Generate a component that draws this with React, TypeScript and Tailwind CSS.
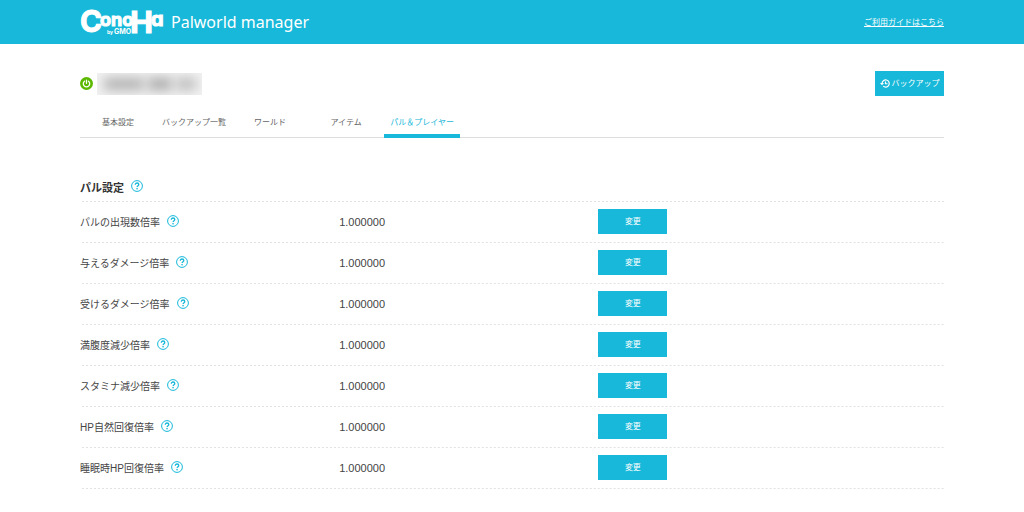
import { useState } from "react"

const tabs = ["基本設定", "バックアップ一覧", "ワールド", "アイテム", "パル＆プレイヤー"]

const settings = [
    { id: "spawn", label: "パルの出現数倍率", value: "1.000000" },
    { id: "attack", label: "与えるダメージ倍率", value: "1.000000" },
    { id: "defense", label: "受けるダメージ倍率", value: "1.000000" },
    { id: "hunger", label: "満腹度減少倍率", value: "1.000000" },
    { id: "stamina", label: "スタミナ減少倍率", value: "1.000000" },
    { id: "hp", label: "HP自然回復倍率", value: "1.000000" },
    { id: "sleep-hp", label: "睡眠時HP回復倍率", value: "1.000000" },
]

export default function App() {
    const [active, setActive] = useState(4)

    return (
        <div className="min-h-screen bg-white font-['Liberation_Sans','Noto_Sans_CJK_JP',sans-serif] text-[#444]">
            <header className="flex h-11 items-center justify-between bg-[#17b8d9] px-20 text-white">
                <div className="flex items-center gap-[7px]">
                    <Logo />
                    <h1 className="font-['Noto_Sans',sans-serif] text-base leading-6 font-normal">Palworld manager</h1>
                </div>
                <a href="#guide" className="pt-0.5 text-[8px] leading-3 underline underline-offset-1">ご利用ガイドはこちら</a>
            </header>

            <main className="px-20 pt-[27px]">
                <div className="flex items-center justify-between">
                    <div className="flex items-center gap-1">
                        <PowerIcon />
                        {/* Server address, masked */}
                        <div className="flex h-[22px] w-[105px] items-center justify-center gap-1 overflow-hidden bg-[#f2f2f2]">
                            <div className="h-3 w-10 bg-[#b0b0b0] blur-[6px]" />
                            <div className="h-3 w-6 bg-[#a8a8a8] blur-[6px]" />
                            <div className="h-3 w-5 bg-[#bbb] blur-[6px]" />
                        </div>
                    </div>
                    <button className="flex h-[25px] w-[69px] items-center justify-center gap-0.5 bg-[#17b8d9] text-[8px] leading-3 text-white">
                        <HistoryIcon />
                        バックアップ
                    </button>
                </div>

                <nav className="mt-3 border-b border-[#ddd]">
                    <div className="-mb-px flex w-[44%]">
                        {tabs.map((tab, i) => (
                            <button
                                key={tab}
                                onClick={() => setActive(i)}
                                className={`h-[30px] flex-1 border-b-4 pt-1 text-[8px] leading-3 whitespace-nowrap ${i === active ? "border-[#17b8d9] text-[#17b8d9]" : "border-transparent text-[#666]"}`}
                            >
                                {tab}
                            </button>
                        ))}
                    </div>
                </nav>

                <section className="pt-10">
                    <div className="flex h-6 items-center gap-[7px] bg-[linear-gradient(90deg,#e2e2e2_50%,transparent_50%)] bg-[length:4px_1px] bg-bottom bg-repeat-x pb-1">
                        <h2 className="text-[11px] leading-4 font-bold text-[#333]">パル設定</h2>
                        <HelpButton label="パル設定" />
                    </div>
                    <table className="w-full table-fixed border-collapse text-left">
                        <tbody>
                            {settings.map(s => (
                                <tr key={s.id} className="h-[41px] bg-[linear-gradient(90deg,#e2e2e2_50%,transparent_50%)] bg-[length:4px_1px] bg-bottom bg-repeat-x">
                                    <th scope="row" className="w-[30%] p-0 font-normal">
                                        <div className="flex items-center gap-[7px]">
                                            <span className="text-[10px] leading-4">{s.label}</span>
                                            <HelpButton label={s.label} />
                                        </div>
                                    </th>
                                    <td className="w-[30%] p-0 pb-0.5 text-[11px] leading-4">{s.value}</td>
                                    <td className="p-0 pb-0.5">
                                        <button className="block h-[25px] w-[69px] bg-[#17b8d9] text-[8px] leading-3 text-white">変更</button>
                                    </td>
                                </tr>
                            ))}
                        </tbody>
                    </table>
                </section>
            </main>
        </div>
    )
}

function HelpButton({ label }: { label: string }) {
    return (
        <button aria-label={`${label}のヘルプ`} className="pb-1 text-[#17b8d9]">
            <svg viewBox="0 0 24 24" fill="none" stroke="currentColor" className="block size-3">
                <circle cx="12" cy="12" r="10.8" strokeWidth="2" />
                <path d="M8.6 9.4c0-2.2 1.4-3.4 3.5-3.4s3.5 1.2 3.5 3c0 2.4-3.4 2.6-3.4 5.2" strokeWidth="2.6" />
                <circle cx="12.1" cy="17.3" r="1.6" fill="currentColor" stroke="none" />
            </svg>
        </button>
    )
}

function PowerIcon() {
    return (
        <svg viewBox="0 0 26 26" fill="none" stroke="#fff" strokeLinecap="round" className="size-[13px]">
            <circle cx="13" cy="13" r="13" fill="#5cb800" stroke="none" />
            <path d="M9 8.4a6.4 6.4 0 1 0 8 0M13 6.5v6" strokeWidth="2.6" />
        </svg>
    )
}

function HistoryIcon() {
    return (
        <svg viewBox="0 0 20 18" fill="none" stroke="currentColor" strokeWidth="2.4" className="h-[9px] w-[10px]">
            <path d="M4 9a7.2 7.2 0 1 1 2.3 5.3" />
            <path d="M0 8h8L4 12.5z" fill="currentColor" stroke="none" />
            <path d="M11 5v4.5h4" />
        </svg>
    )
}

function Logo() {
    return (
        <svg viewBox="0 0 84 42" role="img" aria-label="ConoHa by GMO" className="h-[42px] w-[84px] overflow-visible font-['Inter','Liberation_Sans',sans-serif] font-bold [font-feature-settings:'cv11']" fill="#fff" stroke="#fff">
            <text x="0" y="31" fontSize="30" strokeWidth="1">C</text>
            <text x="20" y="25" fontSize="18" strokeWidth="1">ono</text>
            <text x="50" y="32" fontSize="32" strokeWidth="1" className="font-['Liberation_Sans',sans-serif]">H</text>
            <text x="71" y="25" fontSize="20" strokeWidth="1">a</text>
            <text x="27" y="33" fontSize="5" stroke="none">by</text>
            <text x="34" y="33" fontSize="7" stroke="none">GMO</text>
        </svg>
    )
}
